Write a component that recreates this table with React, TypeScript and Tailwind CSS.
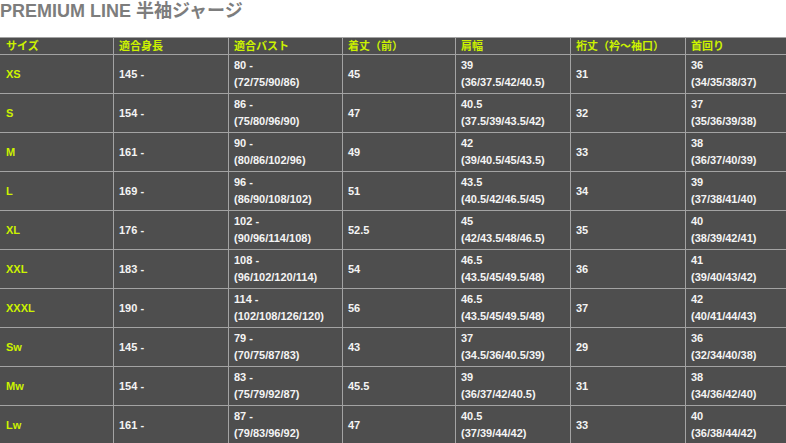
const headers = ["サイズ", "適合身長", "適合バスト", "着丈（前）", "肩幅", "裄丈（衿～袖口）", "首回り"];

type Row = [string, string, [string, string], string, [string, string], string, [string, string]];

const rows: Row[] = [
  ["XS", "145 -", ["80 -", "(72/75/90/86)"], "45", ["39", "(36/37.5/42/40.5)"], "31", ["36", "(34/35/38/37)"]],
  ["S", "154 -", ["86 -", "(75/80/96/90)"], "47", ["40.5", "(37.5/39/43.5/42)"], "32", ["37", "(35/36/39/38)"]],
  ["M", "161 -", ["90 -", "(80/86/102/96)"], "49", ["42", "(39/40.5/45/43.5)"], "33", ["38", "(36/37/40/39)"]],
  ["L", "169 -", ["96 -", "(86/90/108/102)"], "51", ["43.5", "(40.5/42/46.5/45)"], "34", ["39", "(37/38/41/40)"]],
  ["XL", "176 -", ["102 -", "(90/96/114/108)"], "52.5", ["45", "(42/43.5/48/46.5)"], "35", ["40", "(38/39/42/41)"]],
  ["XXL", "183 -", ["108 -", "(96/102/120/114)"], "54", ["46.5", "(43.5/45/49.5/48)"], "36", ["41", "(39/40/43/42)"]],
  ["XXXL", "190 -", ["114 -", "(102/108/126/120)"], "56", ["46.5", "(43.5/45/49.5/48)"], "37", ["42", "(40/41/44/43)"]],
  ["Sw", "145 -", ["79 -", "(70/75/87/83)"], "43", ["37", "(34.5/36/40.5/39)"], "29", ["36", "(32/34/40/38)"]],
  ["Mw", "154 -", ["83 -", "(75/79/92/87)"], "45.5", ["39", "(36/37/42/40.5)"], "31", ["38", "(34/36/42/40)"]],
  ["Lw", "161 -", ["87 -", "(79/83/96/92)"], "47", ["40.5", "(37/39/44/42)"], "33", ["40", "(36/38/44/42)"]],
];

const cell = "border-r border-b border-[#a3a3a3] flex flex-col justify-center";

function Cell({ value, first }: { value: string | [string, string]; first?: boolean }) {
  return (
    <div className={`${cell} h-[39px] leading-[17px] ${first ? "pl-[6px] text-[#ccf200]" : "pl-[5px] text-[#f4f4f4]"}`}>
      {Array.isArray(value) ? (
        <>
          <span>{value[0]}</span>
          <span>{value[1]}</span>
        </>
      ) : (
        <span>{value}</span>
      )}
    </div>
  );
}

export default function App() {
  return (
    <div className="w-[786px] h-[443px] overflow-hidden bg-white font-['Liberation_Sans','Noto_Sans_CJK_JP',sans-serif]">
      <h1 className="mt-[2px] h-[35px] text-[18px] leading-[18px] font-bold text-[#7d7d7d]">
        PREMIUM LINE 半袖ジャージ
      </h1>
      <div className="w-[801px] grid grid-cols-[114px_115px_114px_113px_115px_115px_115px] border-t border-[#a3a3a3] bg-[#4e4e4e] text-[11px] font-bold">
        {headers.map((h, i) => (
          <div
            key={h}
            className={`${cell} h-[17px] leading-[16px] text-[#ccf200] ${i === 0 ? "pl-[6px]" : "pl-[5px]"}`}
          >
            {h}
          </div>
        ))}
        {rows.map((r) =>
          r.map((v, i) => <Cell key={`${r[0]}-${i}`} value={v} first={i === 0} />)
        )}
      </div>
    </div>
  );
}
